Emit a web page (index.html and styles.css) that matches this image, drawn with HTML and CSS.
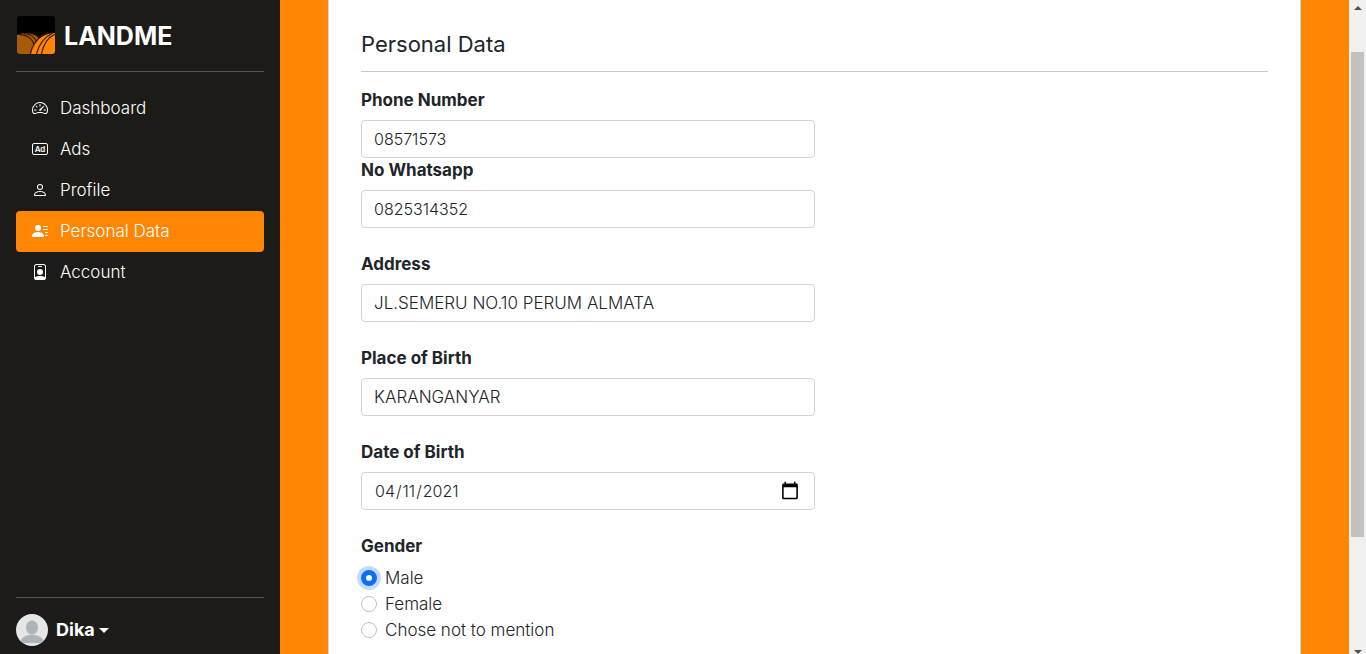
FILE: index.html
```html
<!DOCTYPE html>
<html lang="en">
<head>
<meta charset="utf-8">
<meta name="viewport" content="width=device-width, initial-scale=1">
<title>Landme - Personal Data</title>
<link rel="stylesheet" href="styles.css">
</head>
<body class="layout">
<aside class="sidebar">
  <a class="brand" href="#">
    <svg class="brand-logo" viewBox="0 0 40 40" aria-hidden="true">
      <defs><clipPath id="tile"><rect x="1" y="0" width="38" height="38" rx="3"/></clipPath></defs>
      <g clip-path="url(#tile)">
        <rect width="40" height="40" fill="#000"/>
        <path d="M0 19C8 16 18 17 24 22L18 40H0Z" fill="#a85a08"/>
        <path d="M2 18.500C10 18 17 23 18 29M8 17.500C15 18 19 22 21 26M14 17C19 18 22 20 24 23" fill="none" stroke="#2a1600" stroke-width="1.200"/>
        <path d="M14 40C16 27 25 17 40 17V40Z" fill="#ff8603"/>
        <path d="M14 40C16 27 25 18 33 17M20 40C22 30 26 22 37 17M25 40C27 29 31 21 40 18" fill="none" stroke="#3a1e00" stroke-width="1.200"/>
      </g>
    </svg>
    <span>LANDME</span>
  </a>
  <hr class="rule rule-light">
  <nav class="menu">
    <a class="menu-link" href="#"><svg class="icon" viewBox="0 0 16 16" aria-hidden="true"><path d="M8 4a.5.5 0 0 1 .5.5V6a.5.5 0 0 1-1 0V4.500A.5.5 0 0 1 8 4zM3.732 5.732a.5.5 0 0 1 .707 0l.915.914a.5.5 0 1 1-.708.708l-.914-.915a.5.5 0 0 1 0-.707zM2 10a.5.5 0 0 1 .5-.5h1.586a.5.5 0 0 1 0 1H2.500A.5.5 0 0 1 2 10zm9.500 0a.5.5 0 0 1 .5-.5h1.500a.5.5 0 0 1 0 1H12a.5.5 0 0 1-.5-.5zm.754-4.246a.389.389 0 0 0-.527-.02L7.547 9.310a.91.91 0 1 0 1.302 1.258l3.434-4.297a.389.389 0 0 0-.029-.518z"/><path fill-rule="evenodd" d="M0 10a8 8 0 1 1 15.547 2.661c-.442 1.253-1.845 1.602-2.932 1.250C11.309 13.488 9.475 13 8 13c-1.474 0-3.310.488-4.615.911-1.087.352-2.490.003-2.932-1.250A7.988 7.988 0 0 1 0 10zm8-7a7 7 0 0 0-6.603 9.329c.203.575.923.876 1.680.63C4.397 12.533 6.358 12 8 12s3.604.532 4.923.96c.757.245 1.477-.056 1.680-.631A7 7 0 0 0 8 3z"/></svg>Dashboard</a>
    <a class="menu-link" href="#"><svg class="icon" viewBox="0 0 16 16" aria-hidden="true"><rect x=".5" y="2.500" width="15" height="11" rx="1.500" fill="none" stroke="currentColor"/><text class="icon-text" x="8" y="11" text-anchor="middle">Ad</text></svg>Ads</a>
    <a class="menu-link" href="#"><svg class="icon" viewBox="0 0 16 16" aria-hidden="true"><path fill-rule="evenodd" d="M8 8a3 3 0 1 0 0-6 3 3 0 0 0 0 6zm2-3a2 2 0 1 1-4 0 2 2 0 0 1 4 0zm4 8c0 1-1 1-1 1H3s-1 0-1-1 1-4 6-4 6 3 6 4zm-1-.004c-.001-.246-.154-.986-.832-1.664C11.516 10.680 10.289 10 8 10c-2.290 0-3.516.68-4.168 1.332-.678.678-.83 1.418-.832 1.664h10z"/></svg>Profile</a>
    <a class="menu-link menu-link-active" href="#" aria-current="page"><svg class="icon" viewBox="0 0 16 16" aria-hidden="true"><path d="M6 8a3 3 0 1 0 0-6 3 3 0 0 0 0 6zm-5 6s-1 0-1-1 1-4 6-4 6 3 6 4-1 1-1 1H1zM11 3.500a.5.5 0 0 1 .5-.5h4a.5.5 0 0 1 0 1h-4a.5.5 0 0 1-.5-.5zm.5 2.500a.5.5 0 0 0 0 1h4a.5.5 0 0 0 0-1h-4zm2 3a.5.5 0 0 0 0 1h2a.5.5 0 0 0 0-1h-2zm0 3a.5.5 0 0 0 0 1h2a.5.5 0 0 0 0-1h-2z"/></svg>Personal Data</a>
    <a class="menu-link" href="#"><svg class="icon" viewBox="0 0 16 16" aria-hidden="true"><path d="M6.500 2a.5.5 0 0 0 0 1h3a.5.5 0 0 0 0-1h-3zM11 8a3 3 0 1 1-6 0 3 3 0 0 1 6 0z"/><path fill-rule="evenodd" d="M4.500 0A2.500 2.500 0 0 0 2 2.500V14a2 2 0 0 0 2 2h8a2 2 0 0 0 2-2V2.500A2.500 2.500 0 0 0 11.500 0h-7zM3 2.500A1.500 1.500 0 0 1 4.500 1h7A1.500 1.500 0 0 1 13 2.500v10.795a4.200 4.200 0 0 0-.776-.492C11.392 12.387 10.063 12 8 12s-3.392.387-4.224.803a4.200 4.200 0 0 0-.776.492V2.500z"/></svg>Account</a>
  </nav>
  <hr class="rule rule-light">
  <button class="user" type="button" aria-haspopup="menu">
    <svg class="avatar" viewBox="0 0 32 32" aria-hidden="true">
      <defs><clipPath id="round"><circle cx="16" cy="16" r="16"/></clipPath></defs>
      <g clip-path="url(#round)"><rect width="32" height="32" fill="#e4e6e7"/><ellipse cx="16" cy="13.500" rx="6" ry="7" fill="#aeb4b7"/><path d="M4 29C5 18 27 18 28 29Z" fill="#aeb4b7"/></g>
    </svg>
    <span>Dika</span>
    <span class="caret"></span>
  </button>
</aside>
<main class="content">
  <form class="card">
    <h1 class="card-title">Personal Data</h1>
    <hr class="rule">
    <div class="field field-tight">
      <label class="label" for="phone">Phone Number</label>
      <input class="input input-digits" id="phone" type="text" value="08571573">
    </div>
    <div class="field">
      <label class="label" for="whatsapp">No Whatsapp</label>
      <input class="input input-digits" id="whatsapp" type="text" value="0825314352">
    </div>
    <div class="field">
      <label class="label" for="address">Address</label>
      <input class="input" id="address" type="text" value="JL.SEMERU NO.10 PERUM ALMATA">
    </div>
    <div class="field">
      <label class="label" for="place">Place of Birth</label>
      <input class="input" id="place" type="text" value="KARANGANYAR">
    </div>
    <div class="field">
      <label class="label" for="birth">Date of Birth</label>
      <input class="input input-digits" id="birth" type="date" value="2021-04-11">
    </div>
    <fieldset class="choices">
      <legend class="label">Gender</legend>
      <div class="choice"><input class="radio" id="male" type="radio" name="gender" checked><label for="male">Male</label></div>
      <div class="choice"><input class="radio" id="female" type="radio" name="gender"><label for="female">Female</label></div>
      <div class="choice"><input class="radio" id="none" type="radio" name="gender"><label for="none">Chose not to mention</label></div>
    </fieldset>
  </form>
</main>
<div class="scrollbar" aria-hidden="true">
  <span class="arrow arrow-up"></span>
  <span class="track-above"></span>
  <span class="thumb"></span>
  <span class="track-below"></span>
  <span class="arrow arrow-down"></span>
</div>
</body>
</html>
```
FILE: styles.css
```css
*, *::before, *::after { box-sizing: border-box; }

.layout {
  display: flex;
  height: 100vh;
  margin: 0;
  overflow: hidden;
  background: #ff8603;
  color: #212529;
  font: 300 17px/24px Inter, "Open Sans", sans-serif;
}

.sidebar {
  display: flex;
  flex: none;
  flex-direction: column;
  width: 280px;
  padding: 16px 16px 8px;
  background: #1c1b17;
  color: #fff;
}

.brand {
  display: flex;
  align-items: center;
  gap: 8px;
  color: #fff;
  font-size: 25px;
  font-weight: 700;
  line-height: 36px;
  text-decoration: none;
}

.brand-logo { width: 40px; height: 40px; }

.rule {
  flex: none;
  width: 100%;
  height: 1px;
  margin: 15px 0 16px;
  border: 0;
  background: #c8c9ca;
}

.rule-light { background: #555451; }

.menu { flex: 1; }

.menu-link {
  display: flex;
  align-items: center;
  gap: 12px;
  padding: 8px 16px 9px;
  border-radius: 4px;
  color: #fff;
  text-decoration: none;
}

.menu-link-active { background: #ff8603; }

.icon {
  flex: none;
  width: 16px;
  height: 16px;
  fill: currentColor;
}

.icon-text { font: 600 8px Inter, sans-serif; }

.user {
  display: flex;
  align-items: center;
  gap: 8px;
  padding: 0;
  border: 0;
  background: none;
  color: #fff;
  font: inherit;
  font-size: 18px;
  font-weight: 700;
}

.avatar { width: 32px; height: 32px; }

.caret {
  margin-left: -4px;
  border: 5px solid transparent;
  border-top-color: #fff;
  border-bottom: 0;
}

.content {
  flex: 1;
  min-width: 0;
  padding: 0 48px;
}

.card {
  min-height: 100%;
  padding: 32px;
  border: 1px solid #d5d5d5;
  border-top: 0;
  background: #fff;
}

.card-title {
  margin: 0;
  font-size: 22px;
  font-weight: 400;
  line-height: 24px;
}

.field {
  width: 50%;
  margin-bottom: 24px;
}

.field-tight { margin-bottom: 0; }

.label {
  display: block;
  margin-bottom: 8px;
  padding: 0;
  font-weight: 700;
}

.input {
  display: block;
  width: 100%;
  height: 38px;
  padding: 6px 12px;
  border: 1px solid #ced4da;
  border-radius: 4px;
  background: #fff;
  color: #212529;
  font: inherit;
}

.input-digits { font-size: 16px; }

.input::-webkit-calendar-picker-indicator {
  width: 20px;
  height: 20px;
}

.choices {
  margin: 0;
  padding: 0;
  border: 0;
}

.choice {
  display: flex;
  gap: 8px;
  margin-bottom: 2px;
}

.radio {
  appearance: none;
  width: 16px;
  height: 16px;
  margin: 4px 0;
  border: 1px solid #bfbfbf;
  border-radius: 50%;
  background: #fff;
}

.radio:checked {
  border: 5px solid #0d6efd;
  box-shadow: 0 0 0 4px #c3dbff;
}

.scrollbar {
  display: flex;
  flex: none;
  flex-direction: column;
  align-items: center;
  width: 17px;
  background: #f0f0f0;
}

.arrow {
  border: 4px solid transparent;
}

.arrow-up {
  margin: 6px 0 7px;
  border-top: 0;
  border-bottom-color: #505050;
}

.arrow-down {
  border-bottom: 0;
  border-top-color: #505050;
}

.track-above { flex: 35; }
.thumb { flex: 485; width: 13px; background: #c1c1c1; }
.track-below { flex: 113; }
```
